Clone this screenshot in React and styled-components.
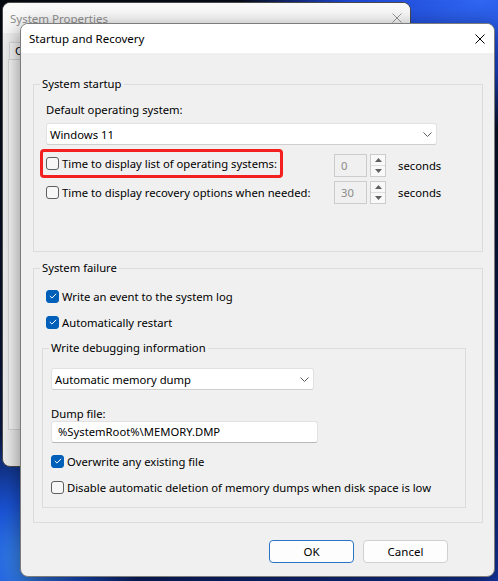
import React from 'react';
import styled, { createGlobalStyle } from 'styled-components';

const GlobalStyle = createGlobalStyle`
  html, body {
    margin: 0;
    padding: 0;
  }
  body {
    width: 498px;
    height: 581px;
    overflow: hidden;
    font-family: "Noto Sans", "Open Sans", sans-serif;
    font-size: 11.25px;
    color: #000;
    background:
      radial-gradient(110px 130px at 30px 560px, #3f93f7 0%, #1a54d8 45%, rgba(20, 60, 200, 0) 100%),
      radial-gradient(240px 130px at 480px 0px, #2f66f2 0%, #1c44cf 55%, rgba(20, 50, 190, 0) 100%),
      linear-gradient(160deg, #05080f 0%, #09122b 45%, #0b2068 80%, #1437a8 100%);
  }
`;

const Desktop = styled.div`
  position: relative;
  width: 498px;
  height: 581px;
`;

/* window behind, only its edges show */
const BackWindow = styled.section`
  position: absolute;
  left: 2px;
  top: 2px;
  width: 409px;
  height: 465px;
  box-sizing: border-box;
  border: 1px solid #4a4a4a;
  border-radius: 8px;
  overflow: hidden;
  background: #f0f0f0;
`;

const BackTitleBar = styled.div`
  height: 30px;
  display: flex;
  align-items: center;
  justify-content: space-between;
  padding: 0 8px 0 7px;
  background: #fafafa;
  color: #8f8f8f;
  font-size: 11.5px;
`;

const BackTabs = styled.div`
  padding: 9px 0 0 6px;
  height: 17px;
`;

const Tab = styled.div`
  display: inline-block;
  height: 17px;
  box-sizing: border-box;
  line-height: 16px;
  padding: 0 10px 0 5px;
  border: 1px solid #d9d9d9;
  border-bottom: none;
  background: #f9f9f9;
`;

const BackPanel = styled.div`
  margin-left: 5px;
  width: 395px;
  height: 371px;
  box-sizing: border-box;
  border: 1px solid #d9d9d9;
  background: #f9f9f9;
`;

/* Startup and Recovery */
const Dialog = styled.section`
  position: absolute;
  left: 20px;
  top: 23px;
  width: 475px;
  height: 554px;
  box-sizing: border-box;
  border: 1px solid #7c7c7c;
  border-radius: 8px;
  overflow: hidden;
  background: #f0f0f0;
  box-shadow: 0 6px 22px rgba(0, 0, 0, 0.5);
  display: flex;
  flex-direction: column;
`;

const TitleBar = styled.div`
  height: 29px;
  flex: none;
  display: flex;
  align-items: center;
  justify-content: space-between;
  padding: 0 9px 0 8px;
  background: #fff;
  font-size: 11.5px;
`;

const Body = styled.div`
  padding: 23px 11px 0 12px;
`;

const Group = styled.fieldset`
  margin: ${(p) => p.$mt || 0}px 0 0 ${(p) => p.$ml || 0}px;
  padding: 0 ${(p) => p.$px}px ${(p) => p.$pb}px;
  ${(p) => (p.$width ? `width: ${p.$width}px; box-sizing: border-box;` : '')}
  border: 1px solid #dcdcdc;
  min-width: 0;
`;

const Legend = styled.legend`
  padding: 0 2px;
  margin-left: ${(p) => p.$shift}px;
  line-height: 16px;
`;

const Label = styled.div`
  line-height: ${(p) => p.$lh || 16}px;
  margin-top: ${(p) => p.$mt || 0}px;
`;

const Select = styled.div`
  width: ${(p) => p.$width}px;
  height: 22px;
  margin-top: ${(p) => p.$mt || 0}px;
  box-sizing: border-box;
  display: flex;
  align-items: center;
  justify-content: space-between;
  padding: 0 4px 0 3px;
  background: #fff;
  border: 1px solid #e2e2e2;
  border-bottom-color: #cfcfcf;
  border-radius: 3px;
`;

const TextField = styled.div`
  width: ${(p) => p.$width}px;
  height: 22px;
  box-sizing: border-box;
  line-height: 20px;
  padding: 0 6px;
  background: #fff;
  border: 1px solid #e2e2e2;
  border-bottom-color: #b8b8b8;
  border-radius: 3px;
`;

const CheckRow = styled.div`
  display: flex;
  align-items: center;
  gap: 3px;
  height: 16px;
  margin-top: ${(p) => p.$mt || 0}px;
`;

const Box = styled.span`
  width: 13px;
  height: 13px;
  flex: none;
  box-sizing: border-box;
  border-radius: 3px;
  border: 1px solid ${(p) => (p.$checked ? '#005fb8' : '#5f5f5f')};
  background: ${(p) => (p.$checked ? '#005fb8' : '#f7f7f7')};
  display: grid;
  place-items: center;
`;

const TimeRow = styled.div`
  display: flex;
  align-items: center;
  height: 23px;
  margin-top: ${(p) => p.$mt || 0}px;
`;

const OptionCell = styled.div`
  width: 288px;
  flex: none;
  display: flex;
  align-items: center;
`;

const Highlight = styled.span`
  display: inline-flex;
  align-items: center;
  gap: 3px;
  height: 29px;
  box-sizing: border-box;
  padding: 0 3px;
  margin: -3px 0 1px -6px;
  border: 3px solid #f41f1f;
  border-radius: 4px;
`;

const Plain = styled.span`
  display: flex;
  align-items: center;
  gap: 3px;
`;

const Spin = styled.div`
  display: flex;
  flex: none;
  gap: 3px;
  width: 52px;
  height: 23px;
`;

const SpinField = styled.div`
  width: 33px;
  box-sizing: border-box;
  border: 1px solid #cccccc;
  background: #f0f0f0;
  color: #8c8c8c;
  padding-left: 6px;
  line-height: 21px;
`;

const SpinButtons = styled.div`
  width: 16px;
  box-sizing: border-box;
  display: flex;
  flex-direction: column;
  border: 1px solid #cccccc;
  background: #f9f9f9;
`;

const SpinBtn = styled.span`
  flex: 1;
  display: grid;
  place-items: center;
  & + & {
    border-top: 1px solid #dedede;
  }
`;

const Unit = styled.span`
  margin-left: 12px;
`;

const ButtonRow = styled.div`
  display: flex;
  justify-content: flex-end;
  gap: 9px;
  margin-top: 17px;
  padding-right: 35px;
`;

const Button = styled.button`
  width: 85px;
  height: 23px;
  box-sizing: border-box;
  font: inherit;
  font-size: 11.5px;
  color: #000;
  background: #fdfdfd;
  border: 1px solid ${(p) => (p.$primary ? '#2a74c4' : '#d0d0d0')};
  border-radius: 4px;
  padding: 0;
`;

const Close = ({ color = '#000' }) => (
  <svg width="10" height="10" viewBox="0 0 10 10">
    <path d="M0.5 0.5 L9.5 9.5 M9.5 0.5 L0.5 9.5" stroke={color} strokeWidth="1" fill="none" />
  </svg>
);

const Chevron = () => (
  <svg width="9" height="5" viewBox="0 0 9 5">
    <path d="M0.5 0.5 L4.5 4.5 L8.5 0.5" stroke="#5a5a5a" strokeWidth="1" fill="none" />
  </svg>
);

const Tick = () => (
  <svg width="8" height="6" viewBox="0 0 8 6">
    <path d="M0.8 3 L2.9 5 L7.2 0.8" stroke="#fff" strokeWidth="1" fill="none" />
  </svg>
);

const Arrow = ({ down }) => (
  <svg width="7" height="4" viewBox="0 0 7 4">
    <path d={down ? 'M0 0 H7 L3.5 4 Z' : 'M0 4 H7 L3.5 0 Z'} fill="#606060" />
  </svg>
);

const Check = ({ checked, children, mt }) => (
  <CheckRow $mt={mt}>
    <Box $checked={checked}>{checked && <Tick />}</Box>
    {children}
  </CheckRow>
);

const SpinBox = ({ value }) => (
  <Spin>
    <SpinField>{value}</SpinField>
    <SpinButtons>
      <SpinBtn>
        <Arrow />
      </SpinBtn>
      <SpinBtn>
        <Arrow down />
      </SpinBtn>
    </SpinButtons>
  </Spin>
);

export default function App() {
  return (
    <Desktop>
      <GlobalStyle />
      <BackWindow>
        <BackTitleBar>
          <span>System Properties</span>
          <Close color="#9a9a9a" />
        </BackTitleBar>
        <BackTabs>
          <Tab>C</Tab>
        </BackTabs>
        <BackPanel />
      </BackWindow>

      <Dialog>
        <TitleBar>
          <span>Startup and Recovery</span>
          <Close />
        </TitleBar>
        <Body>
          <Group $px={12} $pb={47}>
            <Legend $shift={-6}>System startup</Legend>
            <Label $mt={10}>Default operating system:</Label>
            <Select $width={391} $mt={5}>
              <span>Windows 11</span>
              <Chevron />
            </Select>
            <TimeRow $mt={9}>
              <OptionCell>
                <Highlight>
                  <Box />
                  <span>Time to display list of operating systems:</span>
                </Highlight>
              </OptionCell>
              <SpinBox value="0" />
              <Unit>seconds</Unit>
            </TimeRow>
            <TimeRow $mt={4}>
              <OptionCell>
                <Plain>
                  <Box />
                  <span>Time to display recovery options when needed:</span>
                </Plain>
              </OptionCell>
              <SpinBox value="30" />
              <Unit>seconds</Unit>
            </TimeRow>
          </Group>

          <Group $px={12} $pb={14} $mt={8}>
            <Legend $shift={-6}>System failure</Legend>
            <Check checked mt={12}>Write an event to the system log</Check>
            <Check checked mt={10}>Automatically restart</Check>

            <Group $px={8} $pb={12} $mt={10} $ml={-4} $width={424}>
              <Legend $shift={-2}>Write debugging information</Legend>
              <Select $width={263} $mt={12}>
                <span>Automatic memory dump</span>
                <Chevron />
              </Select>
              <Label $mt={17} $lh={14}>Dump file:</Label>
              <TextField $width={267}>%SystemRoot%\MEMORY.DMP</TextField>
              <Check checked mt={10}>Overwrite any existing file</Check>
              <Check mt={10}>Disable automatic deletion of memory dumps when disk space is low</Check>
            </Group>
          </Group>

          <ButtonRow>
            <Button $primary>OK</Button>
            <Button>Cancel</Button>
          </ButtonRow>
        </Body>
      </Dialog>
    </Desktop>
  );
}
